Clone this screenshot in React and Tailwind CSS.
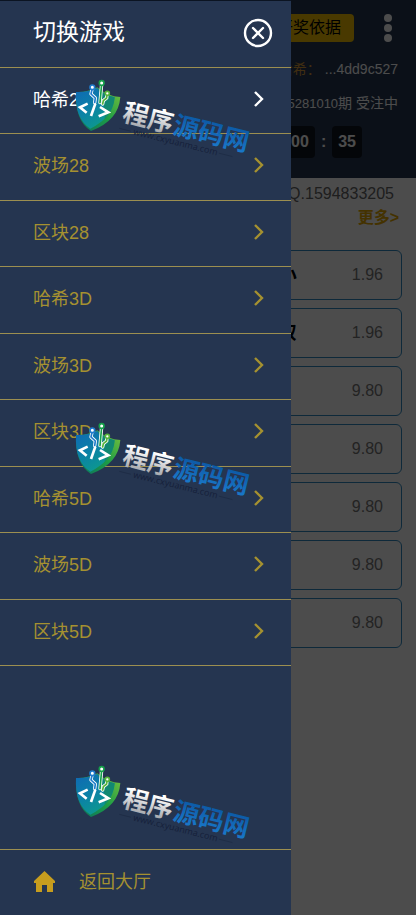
import { useState } from 'react';

const games = ['哈希28', '波场28', '区块28', '哈希3D', '波场3D', '区块3D', '哈希5D', '波场5D', '区块5D'];

const bets = [
  { name: '小', odds: '1.96' },
  { name: '双', odds: '1.96' },
  { name: '', odds: '9.80' },
  { name: '', odds: '9.80' },
  { name: '', odds: '9.80' },
  { name: '', odds: '9.80' },
  { name: '', odds: '9.80' },
];

function Watermark({ id }) {
  return (
    <svg viewBox="0 0 600 270" className="w-[200px] h-[90px]" aria-hidden="true">
      <defs>
        <linearGradient id={id + '-blue'} x1="0" y1="0" x2="0.6" y2="1">
          <stop offset="0" stopColor="#1068b4" />
          <stop offset="0.5" stopColor="#0b80a8" />
          <stop offset="1" stopColor="#0d9b8c" />
        </linearGradient>
        <linearGradient id={id + '-green'} x1="1" y1="0" x2="0" y2="1">
          <stop offset="0" stopColor="#7cc23b" />
          <stop offset="0.5" stopColor="#1c9c46" />
          <stop offset="1" stopColor="#0c6f60" />
        </linearGradient>
        <linearGradient id={id + '-silver'} x1="0" y1="0" x2="0" y2="1">
          <stop offset="0.3" stopColor="#ffffff" />
          <stop offset="1" stopColor="#92969c" />
        </linearGradient>
        <linearGradient id={id + '-sky'} x1="0" y1="0" x2="0" y2="1">
          <stop offset="0.2" stopColor="#0c58a4" />
          <stop offset="1" stopColor="#1c7ed0" />
        </linearGradient>
      </defs>
      <path d="M48 66 Q80 68 112 52 Q142 80 181 81 Q176 152 93 183 Q44 152 48 66Z" fill={`url(#${id}-green)`} />
      <path d="M48 66 Q80 68 112 54 Q132 74 164 82 Q160 142 91 176 Q44 146 48 66Z" fill={`url(#${id}-blue)`} />
      <path d="M112 54 Q132 74 164 82 Q162 118 134 148 Q140 110 112 54Z" fill="#14885e" opacity="0.7" />
      <g fill="none" strokeLinecap="round" strokeLinejoin="round">
        <g stroke="#ffffff" strokeWidth="10">
          <path d="M97 54 L93 72 L106 84 L104 98" />
          <path d="M125 42 L120 98" />
          <path d="M141 72 L140 84 L130 92 L128 102" />
        </g>
        <path d="M97 54 L93 72 L106 84 L104 98" stroke="#1f7ccc" strokeWidth="5" />
        <path d="M125 42 L120 98" stroke="#15a04a" strokeWidth="5" />
        <path d="M141 72 L140 84 L130 92 L128 102" stroke="#58b43c" strokeWidth="5" />
        <path d="M83 101 L60 112 L80 128 M120 111 L145 127 L116 139" stroke="#ffffff" strokeWidth="8" strokeLinecap="butt" strokeLinejoin="miter" />
        <path d="M106 101 L93 138" stroke="#ffffff" strokeWidth="8" strokeLinecap="butt" />
      </g>
      <circle cx="97" cy="52" r="7" fill="#ffffff" stroke="#1f7ccc" strokeWidth="5" />
      <circle cx="125" cy="39" r="7" fill="#ffffff" stroke="#15a04a" strokeWidth="5" />
      <circle cx="142" cy="70" r="6" fill="#ffffff" stroke="#58b43c" strokeWidth="5" />
      <g transform="rotate(14 185 150)" className="font-['Noto_Sans_CJK_SC',sans-serif]">
        <text x="184" y="152" fontSize="77" fontWeight="700" fill={`url(#${id}-silver)`}>程序</text>
        <text x="340" y="152" fontSize="77" fontWeight="700" fill={`url(#${id}-sky)`}>源码网</text>
        <text x="228" y="184" fontSize="27" fill="#15203a" className="font-['Open_Sans',sans-serif]">www.cxyuanma.com</text>
        <path d="M184 176 H220 M492 176 H534" stroke="#1b2942" strokeWidth="2" />
      </g>
    </svg>
  );
}

function Chevron() {
  return (
    <svg viewBox="0 0 12 18" className="w-3 h-[18px]" fill="none" stroke="currentColor" strokeWidth="2.4">
      <path d="M2 1 L9 8 L2 15" />
    </svg>
  );
}

function LotteryPage() {
  return (
    <div className="min-h-screen bg-white">
      <header className="h-[178px] bg-[#253650] px-[18px] pt-[14px] text-sm text-white flex flex-col items-end">
        <div className="flex items-center gap-[30px]">
          <button className="h-7 rounded bg-[#f5c000] px-[13px] text-base text-black">开奖依据</button>
          <button aria-label="菜单" className="mr-[6px] flex flex-col gap-[2px]">
            <span className="size-2 rounded-full bg-white" />
            <span className="size-2 rounded-full bg-white" />
            <span className="size-2 rounded-full bg-white" />
          </button>
        </div>
        <p className="mt-[17px] leading-5"><span className="mr-1 text-[#d89a3a]">哈希：</span>...4dd9c527</p>
        <p className="mt-[14px] leading-5"><span className="text-[13px]">5281010</span>期 受注中</p>
        <div className="mt-3 mr-9 flex items-center gap-[6px] text-base font-bold">
          <span className="rounded bg-black/60 px-[6px] py-1">00</span>
          <span>:</span>
          <span className="rounded bg-black/60 px-[6px] py-1">35</span>
        </div>
      </header>
      <main className="px-[14px]">
        <p className="pt-1 pr-2 text-right text-base text-[#666]">QQ.1594833205</p>
        <div className="flex justify-end pr-[3px]">
          <a href="#more" className="text-base leading-6 font-bold text-[#e5a800]">更多&gt;</a>
        </div>
        <ul className="mt-5 flex flex-col gap-2">
          {bets.map((bet, i) => (
            <li key={i} className="h-[50px] rounded-md border border-[#2f8ac4] flex items-center">
              <span className="w-[73%] text-right text-lg font-bold text-black">{bet.name}</span>
              <span className="ml-auto pr-[18px] text-base text-[#777]">{bet.odds}</span>
            </li>
          ))}
        </ul>
      </main>
    </div>
  );
}

export default function App() {
  const [active, setActive] = useState(0);
  return (
    <div className="relative min-h-screen overflow-hidden font-['Liberation_Sans','Noto_Sans_CJK_SC',sans-serif]">
      <LotteryPage />
      <div className="absolute inset-0 bg-black/70" />
      <aside className="absolute inset-y-0 left-0 w-[70%] border-t border-[#0b1422] bg-[#253550] text-[#a59130] flex flex-col">
        <div className="h-[67px] border-b border-[#9c8f50] pl-[33px] pr-[18px] pb-[3px] flex items-center justify-between text-white">
          <h2 className="text-[23px]">切换游戏</h2>
          <button aria-label="关闭">
            <svg viewBox="0 0 30 30" className="size-[30px]" fill="none" stroke="currentColor" strokeWidth="2.4" strokeLinecap="round">
              <circle cx="15" cy="15" r="13" />
              <path d="M10 10 L20 20 M20 10 L10 20" />
            </svg>
          </button>
        </div>
        <nav>
          {games.map((game, i) => (
            <button
              key={game}
              onClick={() => setActive(i)}
              className={`w-full odd:h-[66px] even:h-[67px] border-b border-[#9c8f50] pl-[33px] pr-[26px] pb-[2px] flex items-center justify-between text-lg ${i === active ? 'text-white' : ''}`}
            >
              {game}
              <Chevron />
            </button>
          ))}
        </nav>
        <a href="#lobby" className="mt-auto h-[66px] border-t border-[#9c8f50] pl-[34px] pb-[2px] flex items-center gap-6 text-lg">
          <svg viewBox="0 0 21 22" className="w-[21px] h-[22px]" fill="#c79d1e">
            <path d="M10.500 0 L21 10 V12 H19 V21 H13 V14 H8 V21 H2 V12 H0 V10Z" />
          </svg>
          返回大厅
        </a>
      </aside>
      <div className="pointer-events-none absolute left-[60px] top-[70px] flex flex-col gap-[253px]">
        <Watermark id="top" />
        <Watermark id="middle" />
        <Watermark id="bottom" />
      </div>
    </div>
  );
}
